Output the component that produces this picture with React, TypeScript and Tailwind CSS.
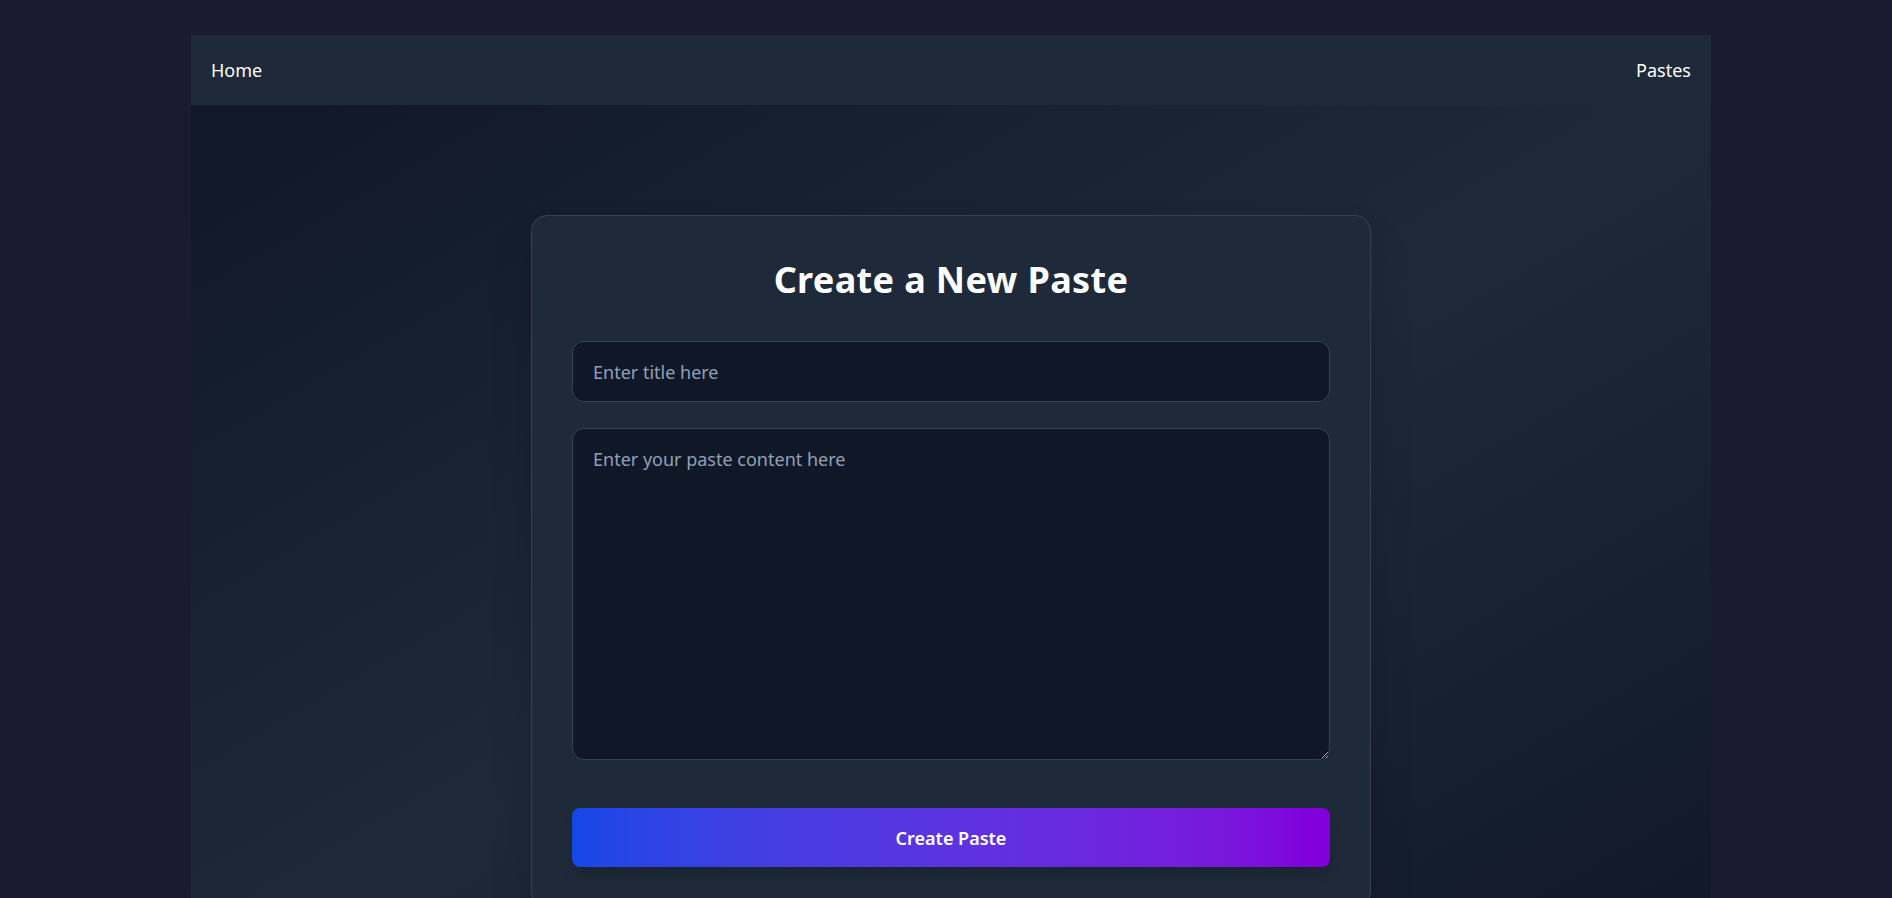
import React, { useState } from 'react';

export default function App() {
    const [title, setTitle] = useState('');
    const [content, setContent] = useState('');

    return (
        <div className="min-h-screen bg-[#1c1a30] pt-[35px] font-['Noto_Sans',sans-serif]">
            <div className="ml-[191px] w-[1520px]">
                <nav className="h-[70px] bg-gray-800 flex items-center justify-between px-5 text-white text-lg">
                    <a href="#">Home</a>
                    <a href="#">Pastes</a>
                </nav>
                <main className="bg-linear-to-br from-gray-900 via-gray-800 to-gray-900 pt-[110px] pb-20 flex justify-center">
                    <form
                        onSubmit={(e) => e.preventDefault()}
                        className="w-[840px] bg-gray-800 border border-gray-700 rounded-2xl p-10 shadow-2xl"
                    >
                        <h1 className="text-4xl leading-10 font-bold text-white text-center mt-[4px] mb-[41px] tracking-[0.01em]">
                            Create a New Paste
                        </h1>
                        <input
                            type="text"
                            placeholder="Enter title here"
                            value={title}
                            onChange={(e) => setTitle(e.target.value)}
                            className="block w-full h-[61px] px-5 bg-gray-900 border border-gray-700 rounded-xl text-lg text-white placeholder:text-slate-400 outline-none"
                        />
                        <textarea
                            placeholder="Enter your paste content here"
                            value={content}
                            onChange={(e) => setContent(e.target.value)}
                            className="block w-full h-[332px] mt-[26px] px-5 py-4 bg-gray-900 border border-gray-700 rounded-xl text-lg leading-7 text-white placeholder:text-slate-400 outline-none"
                        />
                        <button
                            type="submit"
                            className="block w-full h-[59px] mt-12 rounded-lg bg-linear-to-r from-blue-700 to-purple-700 text-white text-lg font-semibold shadow-lg"
                        >
                            Create Paste
                        </button>
                    </form>
                </main>
            </div>
        </div>
    );
}
